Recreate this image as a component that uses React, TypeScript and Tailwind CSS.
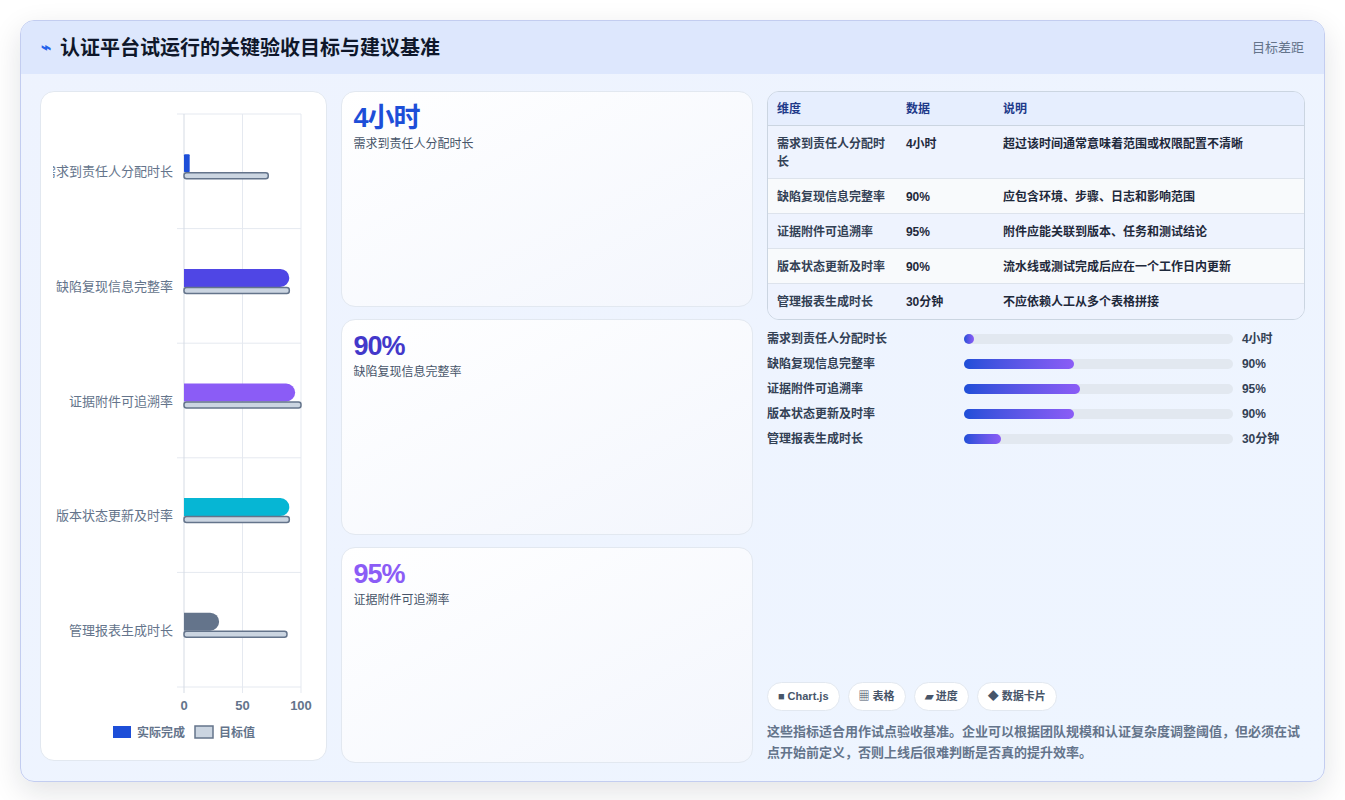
import React from "react";

const F = { fontFamily: '"Liberation Sans","Noto Sans CJK SC",sans-serif' };

const rows = [
  { n: "需求到责任人分配时长", v: "4小时", a: 4, t: 72, c: "#1d4ed8", d: "超过该时间通常意味着范围或权限配置不清晰", p: 10 },
  { n: "缺陷复现信息完整率", v: "90%", a: 90, t: 90, c: "#4f46e5", d: "应包含环境、步骤、日志和影响范围", p: 110 },
  { n: "证据附件可追溯率", v: "95%", a: 95, t: 100, c: "#8b5cf6", d: "附件应能关联到版本、任务和测试结论", p: 116 },
  { n: "版本状态更新及时率", v: "90%", a: 90, t: 90, c: "#06b6d4", d: "流水线或测试完成后应在一个工作日内更新", p: 110 },
  { n: "管理报表生成时长", v: "30分钟", a: 30, t: 88, c: "#64748b", d: "不应依赖人工从多个表格拼接", p: 37 },
];

function Chart() {
  const x0 = 143, W = 117, top = 22, bot = 595, bh = (bot - top) / 5;
  return (
    <svg width="286" height="669" className="block">
      <defs>
        <clipPath id="lc"><rect x="12" y="0" width="274" height="669" /></clipPath>
      </defs>
      {[0, 1, 2, 3, 4, 5].map((i) => (
        <line key={i} x1={x0 - 7} x2={x0 + W} y1={top + bh * i} y2={top + bh * i} stroke="#e5e9f0" />
      ))}
      {[0, 50, 100].map((v) => (
        <line key={v} x1={x0 + (W * v) / 100} x2={x0 + (W * v) / 100} y1={top} y2={bot + 6} stroke={v === 0 ? "#d5dbe4" : "#e5e9f0"} />
      ))}
      {rows.map((r, i) => {
        const c = top + bh * (i + 0.5);
        const aw = (W * r.a) / 100;
        return (
          <g key={i}>
            <text x="132" y={c + 5} textAnchor="end" fontSize="13" fill="#64748b" clipPath="url(#lc)" style={F}>{r.n}</text>
            {aw < 20 ? (
              <rect x={x0} y={c - 17} width={aw + 1} height="18" rx="1" fill={r.c} />
            ) : (
              <path d={`M${x0} ${c - 17} H${x0 + aw - 9} A9 9 0 0 1 ${x0 + aw} ${c - 8} A9 9 0 0 1 ${x0 + aw - 9} ${c + 1} H${x0} Z`} fill={r.c} />
            )}
            <rect x={x0} y={c + 1.5} width={(W * r.t) / 100} height="6" rx="2.5" fill="#cbd5e1" stroke="#64748b" strokeWidth="1.5" />
          </g>
        );
      })}
      {[0, 50, 100].map((v) => (
        <text key={v} x={x0 + (W * v) / 100} y="618" textAnchor="middle" fontSize="13" fontWeight="bold" fill="#64748b" style={F}>{v}</text>
      ))}
      <rect x="72" y="634" width="18" height="12" fill="#1d4ed8" />
      <text x="96" y="645" fontSize="12" fontWeight="bold" fill="#64748b" style={F}>实际完成</text>
      <rect x="154" y="634" width="18" height="12" fill="#cbd5e1" stroke="#64748b" strokeWidth="1.5" />
      <text x="178" y="645" fontSize="12" fontWeight="bold" fill="#64748b" style={F}>目标值</text>
    </svg>
  );
}

export default function App() {
  return (
    <div className="min-h-screen bg-white pt-[20px] px-[20px]" style={F}>
      <div className="w-[1305px] h-[762px] rounded-[14px] border border-[#c3cdf0] overflow-hidden shadow-[0_10px_30px_rgba(15,23,42,0.12)] bg-gradient-to-br from-[#eef3fe] to-[#eef5ff] flex flex-col">
        <div className="h-[56px] bg-[#dde7fd] flex items-center justify-between pl-[20px] pr-[20px]">
          <div className="flex items-center gap-[9px]">
            <span className="text-[#2563eb] text-[17px] font-bold leading-none">⌁</span>
            <span className="text-[20px] font-bold text-[#0f172a]">认证平台试运行的关键验收目标与建议基准</span>
          </div>
          <span className="text-[13px] text-[#64748b]">目标差距</span>
        </div>
        <div className="flex gap-[14px] px-[19px] pt-[17px] pb-[18px] flex-1">
          <div className="w-[287px] h-[670px] bg-white rounded-[14px] border border-[#e2e8f0] overflow-hidden">
            <Chart />
          </div>
          <div className="w-[413px] flex flex-col gap-[12px]">
            {[
              { v: "4小时", n: "需求到责任人分配时长", c: "text-[#1d4ed8]" },
              { v: "90%", n: "缺陷复现信息完整率", c: "text-[#4338ca]" },
              { v: "95%", n: "证据附件可追溯率", c: "text-[#8b5cf6]" },
            ].map((k) => (
              <div key={k.v} className="h-[216px] rounded-[14px] border border-[#e2e8f0] bg-gradient-to-br from-white to-[#f3f6fd] px-[12px] pt-[8px]">
                <div className={`text-[27px] font-bold leading-[36px] tracking-[-1px] ${k.c}`}>{k.v}</div>
                <div className="text-[12px] text-[#475569] leading-[16px]">{k.n}</div>
              </div>
            ))}
          </div>
          <div className="w-[539px] flex flex-col">
            <div className="rounded-[12px] border border-[#cbd5e1] overflow-hidden text-[12px]">
              <div className="flex h-[34px] items-center bg-[#e6eefe] text-[#1e3a8a] font-bold border-b border-[#cbd5e1]">
                <div className="w-[138px] pl-[9px]">维度</div>
                <div className="w-[97px]">数据</div>
                <div>说明</div>
              </div>
              {rows.map((r, i) => (
                <div key={i} className={`flex ${i === 0 ? "h-[53px]" : "h-[35px]"} items-start pt-[9px] leading-[18px] text-[#334155] font-bold ${i % 2 === 0 ? "bg-[#eef3fe]" : "bg-[#f8fafc]"} ${i < 4 ? "border-b border-[#dde3ec]" : ""}`}>
                  <div className="w-[138px] pl-[9px] pr-[16px]">{r.n}</div>
                  <div className="w-[97px] text-[#1e293b]">{r.v}</div>
                  <div className="text-[#1e293b]">{r.d}</div>
                </div>
              ))}
            </div>
            <div className="mt-[10px] flex flex-col gap-[7px]">
              {rows.map((r, i) => (
                <div key={i} className="flex items-center h-[18px] text-[12px] font-bold">
                  <div className="w-[197px] text-[#334155]">{r.n}</div>
                  <div className="w-[269px] h-[10px] rounded-full bg-[#e2e8f0]">
                    <div className="h-full rounded-full bg-gradient-to-r from-[#1d4ed8] to-[#8b5cf6]" style={{ width: r.p }} />
                  </div>
                  <div className="ml-[9px] text-[#334155]">{r.v}</div>
                </div>
              ))}
            </div>
            <div className="flex-1" />
            <div className="flex gap-[8px] text-[11px] font-bold text-[#475569]">
              {["■ Chart.js", "▦ 表格", "▰ 进度", "◆ 数据卡片"].map((t) => (
                <span key={t} className="h-[29px] px-[10px] flex items-center rounded-full bg-white border border-[#e2e8f0]">{t}</span>
              ))}
            </div>
            <p className="mt-[10px] text-[13px] leading-[21px] text-[#64748b] font-bold">
              这些指标适合用作试点验收基准。企业可以根据团队规模和认证复杂度调整阈值，但必须在试点开始前定义，否则上线后很难判断是否真的提升效率。
            </p>
          </div>
        </div>
      </div>
    </div>
  );
}
